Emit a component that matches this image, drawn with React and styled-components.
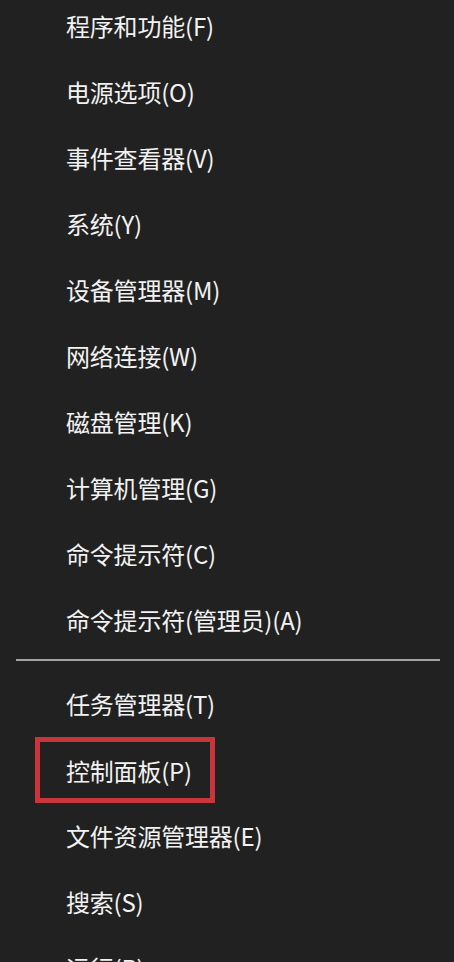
import React from 'react'
import styled, { createGlobalStyle } from 'styled-components'

const GlobalStyle = createGlobalStyle`
    html, body {
        margin: 0;
        padding: 0;
        background-color: #212121;
        overflow: hidden;
    }
`

const upper = [
    '程序和功能(F)',
    '电源选项(O)',
    '事件查看器(V)',
    '系统(Y)',
    '设备管理器(M)',
    '网络连接(W)',
    '磁盘管理(K)',
    '计算机管理(G)',
    '命令提示符(C)',
    '命令提示符(管理员)(A)',
]

const lower = [
    { text: '任务管理器(T)' },
    { text: '控制面板(P)', marked: true },
    { text: '文件资源管理器(E)' },
    { text: '搜索(S)' },
    { text: '运行(R)' },
]

function App() {
    return (
        <>
            <GlobalStyle />
            <Menu>
                {upper.map((text) => (
                    <Item key={text}>{text}</Item>
                ))}
                <Separator />
                {lower.map((item) => (
                    <Item key={item.text}>
                        <Label $marked={item.marked}>{item.text}</Label>
                    </Item>
                ))}
            </Menu>
        </>
    )
}

export default App

const Menu = styled.div`
    width: 454px;
    height: 970px;
    margin-top: -8px;
    display: flex;
    flex-direction: column;
    background-color: #212121;
    font-family: "Noto Sans CJK SC", "Noto Sans", sans-serif;
`

const Item = styled.div`
    height: 66px;
    flex-shrink: 0;
    display: flex;
    align-items: center;
    padding-left: 66px;
    color: #f2f2f2;
    font-size: 24px;
    letter-spacing: -0.2px;
`

const Label = styled.span`
    display: flex;
    align-items: center;
    box-sizing: border-box;
    height: ${(p) => (p.$marked ? '66px' : 'auto')};
    margin-left: ${(p) => (p.$marked ? '-31px' : '0')};
    margin-top: ${(p) => (p.$marked ? '2px' : '0')};
    padding: ${(p) => (p.$marked ? '0 18px 0 26px' : '0')};
    border: ${(p) => (p.$marked ? '5px solid #c8353b' : 'none')};
`

const Separator = styled.div`
    flex-shrink: 0;
    height: 2px;
    margin: 7px 14px 9px 16px;
    background-color: #a3a3a3;
`
